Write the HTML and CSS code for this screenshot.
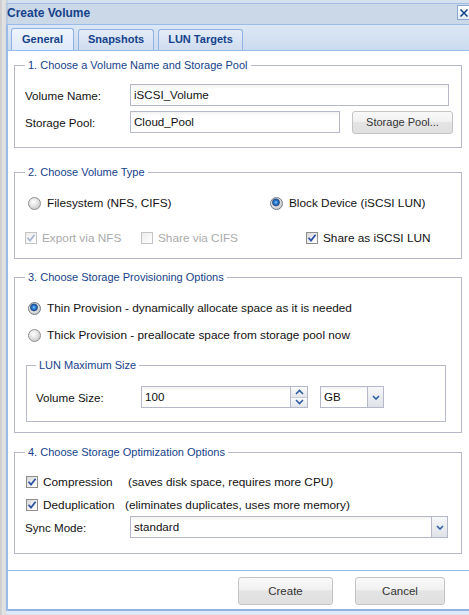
FILE: index.html
```html
<!DOCTYPE html>
<html>
<head>
<meta charset="utf-8">
<link rel="stylesheet" href="styles.css">
</head>
<body>
<div class="screen">
  <div class="side"></div>
  <div class="window">
    <div class="frame-top"></div>
    <div class="titlebar">
      <span class="title">Create Volume</span>
      <span class="close"><svg width="10" height="10" viewBox="0 0 10 10"><path d="M1.5 1.5 L8.5 8.5 M8.5 1.5 L1.5 8.5" stroke="#15428b" stroke-width="1.6" fill="none"/></svg></span>
    </div>
    <div class="tabstrip">
      <div class="tab active">General</div>
      <div class="tab">Snapshots</div>
      <div class="tab">LUN Targets</div>
    </div>
    <div class="content">
      <fieldset class="fs fs1">
        <legend>1. Choose a Volume Name and Storage Pool</legend>
        <div class="form-row">
          <span class="label">Volume Name:</span>
          <span class="field w-name">iSCSI_Volume</span>
        </div>
        <div class="form-row row-gap5">
          <span class="label">Storage Pool:</span>
          <span class="field w-pool">Cloud_Pool</span>
          <span class="btn btn-pool">Storage Pool...</span>
        </div>
      </fieldset>

      <fieldset class="fs fs2">
        <legend>2. Choose Volume Type</legend>
        <div class="opt-row">
          <span class="opt w-fs"><span class="radio"></span><span class="opt-text">Filesystem (NFS, CIFS)</span></span>
          <span class="opt"><span class="radio on"></span><span class="opt-text">Block Device (iSCSI LUN)</span></span>
        </div>
        <div class="opt-row row-gap19">
          <span class="opt w-nfs disabled"><span class="check"><svg width="10" height="10" viewBox="0 0 10 10"><path d="M1.5 4.8 L4 7.6 L8.6 1.8" stroke="#a9b8cf" stroke-width="1.7" fill="none"/></svg></span><span class="opt-text">Export via NFS</span></span>
          <span class="opt w-cifs disabled"><span class="check"></span><span class="opt-text">Share via CIFS</span></span>
          <span class="opt"><span class="check"><svg width="10" height="10" viewBox="0 0 10 10"><path d="M1.5 4.8 L4 7.6 L8.6 1.8" stroke="#2d4fa5" stroke-width="1.7" fill="none"/></svg></span><span class="opt-text">Share as iSCSI LUN</span></span>
        </div>
      </fieldset>

      <fieldset class="fs fs3">
        <legend>3. Choose Storage Provisioning Options</legend>
        <div class="opt-row">
          <span class="opt"><span class="radio on"></span><span class="opt-text">Thin Provision - dynamically allocate space as it is needed</span></span>
        </div>
        <div class="opt-row row-gap11">
          <span class="opt"><span class="radio"></span><span class="opt-text">Thick Provision - preallocate space from storage pool now</span></span>
        </div>
        <fieldset class="fs inner">
          <legend>LUN Maximum Size</legend>
          <div class="form-row">
            <span class="label">Volume Size:</span>
            <span class="spinner">
              <span class="field w-size">100</span>
              <span class="spin-trigger">
                <span class="spin-half"><svg width="9" height="6" viewBox="0 0 9 6"><path d="M1 5 L4.5 1.5 L8 5" stroke="#2e5ea5" stroke-width="1.6" fill="none"/></svg></span>
                <span class="spin-half"><svg width="9" height="6" viewBox="0 0 9 6"><path d="M1 1 L4.5 4.5 L8 1" stroke="#2e5ea5" stroke-width="1.6" fill="none"/></svg></span>
              </span>
            </span>
            <span class="combo combo-gb">
              <span class="field w-gb">GB</span>
              <span class="trigger"><svg width="8" height="5" viewBox="0 0 8 5"><path d="M1 1 L4 4 L7 1" stroke="#2e5ea5" stroke-width="1.6" fill="none"/></svg></span>
            </span>
          </div>
        </fieldset>
      </fieldset>

      <fieldset class="fs fs4">
        <legend>4. Choose Storage Optimization Options</legend>
        <div class="opt-row">
          <span class="opt"><span class="check"><svg width="10" height="10" viewBox="0 0 10 10"><path d="M1.5 4.8 L4 7.6 L8.6 1.8" stroke="#2d4fa5" stroke-width="1.7" fill="none"/></svg></span><span class="opt-text name-comp">Compression</span><span class="opt-text">(saves disk space, requires more CPU)</span></span>
        </div>
        <div class="opt-row row-gap7">
          <span class="opt"><span class="check"><svg width="10" height="10" viewBox="0 0 10 10"><path d="M1.5 4.8 L4 7.6 L8.6 1.8" stroke="#2d4fa5" stroke-width="1.7" fill="none"/></svg></span><span class="opt-text name-dedup">Deduplication</span><span class="opt-text">(eliminates duplicates, uses more memory)</span></span>
        </div>
        <div class="form-row row-gap3">
          <span class="label">Sync Mode:</span>
          <span class="combo">
            <span class="field w-sync">standard</span>
            <span class="trigger"><svg width="8" height="5" viewBox="0 0 8 5"><path d="M1 1 L4 4 L7 1" stroke="#2e5ea5" stroke-width="1.6" fill="none"/></svg></span>
          </span>
        </div>
      </fieldset>
    </div>
    <div class="footer">
      <span class="btn btn-create">Create</span>
      <span class="btn btn-cancel">Cancel</span>
    </div>
    <div class="frame-bottom"></div>
  </div>
</div>
</body>
</html>
```

FILE: styles.css
```css
html, body {
  margin: 0;
  padding: 0;
  width: 469px;
  height: 615px;
  overflow: hidden;
  background: #dfe8f6;
  font-family: "Liberation Sans", Arial, sans-serif;
  color: #111;
}

.screen {
  display: flex;
  width: 469px;
  height: 615px;
  overflow: hidden;
}

.side {
  flex: 0 0 6px;
  background: linear-gradient(to right, #cfcfcf 0, #cfcfcf 2px, #e4e4e4 2px, #dcdcdc 6px);
}

.window {
  flex: 0 0 463px;
  display: flex;
  flex-direction: column;
  background: #dfe8f6;
}

.frame-top {
  height: 3px;
  background: #d6e1ee;
  border-left: 2px solid #c7d5e6;
}

.titlebar {
  height: 20px;
  border-top: 1px solid #9fbde6;
  border-bottom: 1px solid #99bbe8;
  border-left: 2px solid #b7cbe4;
  background: #cbd8e7;
  display: flex;
  justify-content: space-between;
  align-items: flex-start;
}

.title {
  font-weight: bold;
  font-size: 12px;
  line-height: 14px;
  margin-top: 2px;
  margin-left: -1px;
  color: #15428b;
}

.close {
  width: 12px;
  height: 13px;
  margin-top: 1px;
  margin-right: -1px;
  border: 1px solid #8aa8d2;
  border-right: none;
  background: linear-gradient(#ffffff, #e4ecf7);
  display: flex;
  align-items: center;
  justify-content: center;
}

.tabstrip {
  height: 25px;
  border-bottom: 1px solid #99bbe8;
  border-left: 2px solid #99bbe8;
  background: linear-gradient(#dde7f5, #cbdbef);
  display: flex;
  align-items: flex-end;
  padding-left: 3px;
  gap: 4px;
}

.tab {
  height: 20px;
  padding: 0 9px;
  border: 1px solid #8db2e3;
  border-bottom: none;
  border-radius: 3px 3px 0 0;
  background: linear-gradient(#e4ecf8, #cfdcef);
  font-size: 11px;
  font-weight: bold;
  line-height: 19px;
  color: #15428b;
}

.tab.active {
  height: 21px;
  padding: 0 10px;
  background: linear-gradient(#eef4fc, #dfeafa);
  line-height: 20px;
}

.content {
  background: #fff;
  border-left: 2px solid #99bbe8;
  border-bottom: 1px solid #99bbe8;
  padding: 0 0 16px 6px;
  display: flex;
  flex-direction: column;
}

.fs {
  margin: 0;
  width: 448px;
  box-sizing: border-box;
  border: 1px solid #b5b8c8;
  padding: 0 8px 0 10px;
}

.fs legend {
  font-size: 11px;
  line-height: 14px;
  color: #15428b;
  padding: 0 3px;
  margin-left: 0;
}

.fs1 { margin-top: 7px; padding-top: 12px; padding-bottom: 14px; }
.fs2 { margin-top: 17px; padding-top: 16px; padding-bottom: 12px; padding-left: 11px; }
.fs3 { margin-top: 11px; padding-top: 16px; padding-bottom: 10px; padding-left: 11px; }
.fs4 { margin-top: 12px; padding-top: 15px; padding-bottom: 15px; }

.fs2 > legend, .fs3 > legend { margin-left: -1px; }

.fs.inner {
  width: 420px;
  margin-top: 15px;
  margin-left: 0;
  padding: 14px 0 13px 9px;
}

.fs.inner legend {
  margin-left: 0;
}

.form-row {
  display: flex;
  align-items: center;
  height: 22px;
}

.row-gap5 { margin-top: 5px; }
.row-gap3 { margin-top: 3px; }
.row-gap7 { margin-top: 7px; }
.row-gap11 { margin-top: 11px; }
.row-gap19 { margin-top: 19px; }

.label {
  flex: 0 0 105px;
  font-size: 11.6px;
  color: #111;
}

.field {
  box-sizing: border-box;
  height: 22px;
  border: 1px solid #b5b8c8;
  background: linear-gradient(#f2f2f2 0, #ffffff 4px);
  font-size: 11.6px;
  line-height: 20px;
  padding-left: 3px;
  color: #111;
}

.w-name { width: 319px; }
.w-pool { width: 210px; }
.w-size { width: 150px; }
.w-gb { width: 47px; border-right: none; }
.w-sync { width: 301px; border-right: none; }

.btn {
  box-sizing: border-box;
  display: flex;
  align-items: center;
  justify-content: center;
  border: 1px solid #c4c4c4;
  border-radius: 3px;
  background: linear-gradient(#f9f9f9 0, #f1f1f1 45%, #e4e4e4 50%, #e0e0e0 100%);
  font-size: 11px;
  color: #333;
}

.btn-pool {
  width: 101px;
  height: 23px;
  margin-left: 12px;
}

.opt-row {
  display: flex;
  align-items: center;
  height: 16px;
}

.opt {
  display: flex;
  align-items: center;
  font-size: 11.8px;
  color: #111;
}

.w-fs { width: 242px; }
.w-nfs { width: 116px; }
.w-cifs { width: 165px; }

.radio {
  box-sizing: border-box;
  width: 13px;
  height: 13px;
  margin-left: 2px;
  margin-right: 6px;
  border-radius: 50%;
  border: 1px solid #8d8d8d;
  background: radial-gradient(circle at 40% 35%, #ffffff 0, #e6e6e6 40%, #b9b9b9 100%);
}

.radio.on {
  border-color: #6f7a88;
  background:
    radial-gradient(circle at 45% 40%, #8fd0ff 0, #2f86d8 1.5px, #1c4f9a 3.2px, rgba(40,60,90,0.6) 3.8px, transparent 4.3px),
    radial-gradient(circle at 40% 35%, #ffffff 0, #e6e6e6 40%, #b9b9b9 100%);
}

.check {
  box-sizing: border-box;
  width: 12px;
  height: 12px;
  margin-right: 5px;
  border: 1px solid #8e8e8e;
  background: linear-gradient(135deg, #d6d6d6 0, #f2f2f2 60%, #ffffff 100%);
  display: flex;
  align-items: center;
  justify-content: center;
}

.fs2 .opt-row:nth-child(3) .check { margin-left: -1px; }
.fs4 .check { margin-left: 1px; }

.disabled .check {
  border-color: #c3c3c3;
  background: linear-gradient(135deg, #ececec 0, #f8f8f8 60%, #ffffff 100%);
}

.disabled .opt-text { color: #aaaaaa; }

.name-comp { width: 85px; }
.name-dedup { width: 82px; }

.spinner {
  display: flex;
  height: 22px;
  margin-left: 0;
}

.inner .label { flex-basis: 105px; }

.spin-trigger {
  box-sizing: border-box;
  width: 17px;
  height: 22px;
  border: 1px solid #b5b8c8;
  border-left: none;
  display: flex;
  flex-direction: column;
}

.spin-half {
  flex: 1;
  display: flex;
  align-items: center;
  justify-content: center;
  background: linear-gradient(#fbfbfb, #e3e6ec);
}

.spin-half + .spin-half {
  border-top: 1px solid #c9ccd6;
}

.combo {
  display: flex;
  height: 22px;
}

.combo-gb { margin-left: 12px; }

.trigger {
  box-sizing: border-box;
  width: 17px;
  height: 22px;
  border: 1px solid #b5b8c8;
  background: linear-gradient(#f6f7f9, #dfe2e8);
  display: flex;
  align-items: center;
  justify-content: center;
}

.footer {
  height: 38px;
  background: #fff;
  border-left: 2px solid #99bbe8;
  display: flex;
  justify-content: flex-end;
  align-items: flex-start;
  padding-top: 6px;
  padding-right: 24px;
  box-sizing: border-box;
  gap: 22px;
}

.btn-create { width: 95px; height: 28px; font-size: 11.5px; }
.btn-cancel { width: 90px; height: 28px; font-size: 11.5px; }

.frame-bottom {
  height: 2px;
  background: #8fb2e2;
  border-left: 2px solid #99bbe8;
}
```
